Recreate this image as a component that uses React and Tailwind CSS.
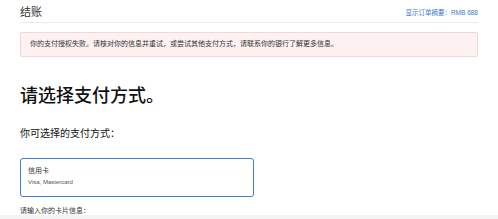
import React from 'react';

const font = { fontFamily: '"Liberation Sans", "Noto Sans CJK SC", sans-serif' };

function PaymentCard() {
  return (
    <div className="mt-[19px] h-[39px] w-[234px] rounded-[3px] border-[1.5px] border-[#3f7fd4] px-[7px] pt-[7px]">
      <div className="text-[7px] leading-[9px] text-[#333]">信用卡</div>
      <div className="mt-[3px] text-[6px] leading-[8px] text-[#555]">Visa, Mastercard</div>
    </div>
  );
}

export default function App() {
  return (
    <div className="h-[219px] w-full overflow-hidden bg-white" style={font}>
      <div className="px-[20px]">
        <div className="flex h-[23px] items-center justify-between border-b border-[#ececec]">
          <span className="pt-[2px] text-[11px] leading-none text-[#333]">结账</span>
          <span className="pt-[4px] text-[6.5px] leading-none text-[#3a78c3]">显示订单摘要：RMB 688</span>
        </div>

        <div className="mt-[9px] flex h-[25px] items-center rounded-[2px] border border-[#f3d6d6] bg-[#fdf1f1] px-[9px] text-[7px] text-[#333]">
          你的支付授权失败。请核对你的信息并重试，或尝试其他支付方式，请联系你的银行了解更多信息。
        </div>

        <h1 className="mt-[30px] text-[18px] font-medium leading-[18px] text-[#111]">请选择支付方式。</h1>

        <p className="mt-[24px] text-[10px] leading-[10px] text-[#111]">你可选择的支付方式：</p>

        <PaymentCard />

        <p className="mt-[9.5px] text-[7px] leading-[8px] text-[#333]">请输入你的卡片信息：</p>
      </div>
      <div className="mt-[0.5px] h-[10px] w-full bg-[#f3f3f3]" />
    </div>
  );
}
